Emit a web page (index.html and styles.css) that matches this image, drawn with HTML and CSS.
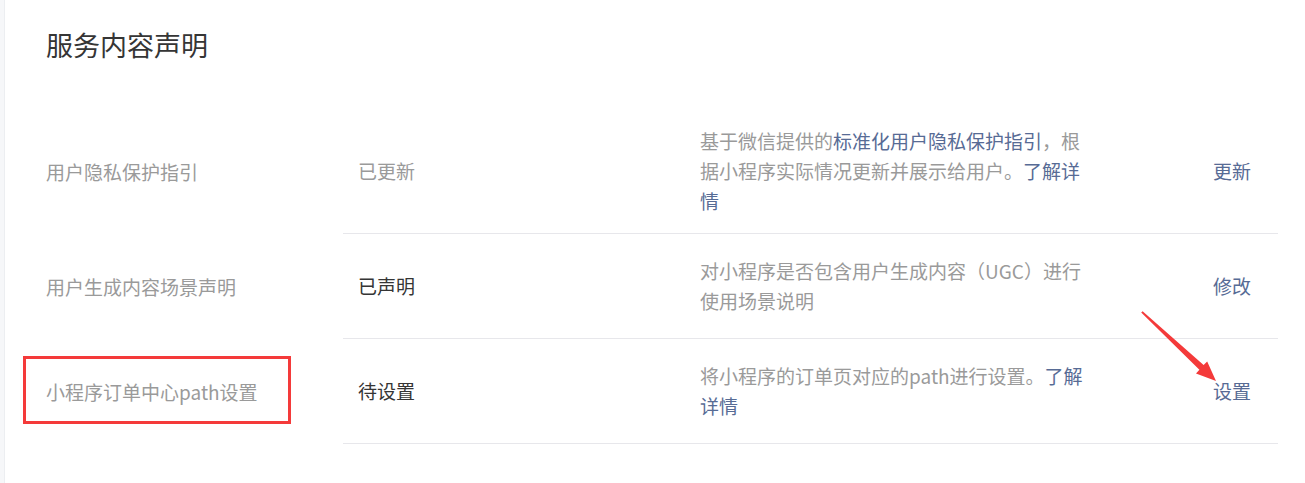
FILE: index.html
```html
<!DOCTYPE html>
<html lang="zh-CN">
<head>
    <meta charset="UTF-8">
    <meta name="viewport" content="width=device-width, initial-scale=1.0">
    <title>服务内容声明</title>
    <link rel="stylesheet" href="styles.css">
</head>
<body>

    <div class="panel">
        <h2 class="title">服务内容声明</h2>

        <div class="list">
            <div class="row first">
                <div class="row-label">用户隐私保护指引</div>
                <div class="row-body">
                    <div class="status">已更新</div>
                    <div class="desc">基于微信提供的<a href="#">标准化用户隐私保护指引</a>，根据小程序实际情况更新并展示给用户。<a href="#">了解详情</a></div>
                    <a class="action" href="#">更新</a>
                </div>
            </div>

            <div class="row">
                <div class="row-label">用户生成内容场景声明</div>
                <div class="row-body">
                    <div class="status done">已声明</div>
                    <div class="desc">对小程序是否包含用户生成内容（UGC）进行使用场景说明</div>
                    <a class="action" href="#">修改</a>
                </div>
            </div>

            <div class="row">
                <div class="row-label">
                    小程序订单中心path设置
                    <!-- annotation box -->
                    <span class="mark"></span>
                </div>
                <div class="row-body">
                    <div class="status done">待设置</div>
                    <div class="desc">将小程序的订单页对应的path进行设置。<a href="#">了解详情</a></div>
                    <a class="action" href="#">设置</a>
                </div>
            </div>
        </div>

        <!-- annotation arrow -->
        <svg class="arrow" viewBox="1138 308 82 78" width="82" height="78">
            <polygon fill="#f43a3a" points="1141.2,312.6 1142.6,311.2 1203.6,365.0 1207.2,361.4 1216,381 1196,373.4 1199.4,369.8"/>
        </svg>
    </div>

</body>
</html>
```

FILE: styles.css
```css
* {
    box-sizing: border-box;
}
body {
    margin: 0;
    background: #f6f7f9;
    font-family: "Noto Sans CJK SC", "Noto Sans", sans-serif;
    font-size: 19px;
    color: #353535;
}
a {
    color: #576b95;
    text-decoration: none;
}
.panel {
    position: relative;
    margin-left: 4px;
    min-height: 100vh;
    background: #fff;
    border-left: 1px solid #eceef1;
    padding: 26px 27px 0 41px;
}
.title {
    margin: 0 0 45px;
    font-size: 27px;
    font-weight: normal;
    line-height: 38px;
    color: #353535;
}
.row {
    display: flex;
}
.row-label {
    position: relative;
    width: 297px;
    flex-shrink: 0;
    display: flex;
    align-items: center;
    color: #9a9a9a;
}
.row-body {
    flex: 1;
    display: flex;
    align-items: center;
    padding: 22px 27px 22px 15px;
    border-bottom: 1px solid #e7e7eb;
    line-height: 30px;
}
.row.first .row-body {
    padding-top: 17px;
    padding-bottom: 17px;
}
.status {
    width: 342px;
    flex-shrink: 0;
    color: #9a9a9a;
}
.status.done {
    color: #353535;
}
.desc {
    width: 390px;
    color: #9a9a9a;
}
.action {
    margin-left: auto;
}
.mark {
    position: absolute;
    left: -23px;
    top: 17px;
    width: 268px;
    height: 68px;
    border: 3px solid #f43a3a;
}
.arrow {
    position: absolute;
    left: 1133px;
    top: 308px;
    pointer-events: none;
}
```
